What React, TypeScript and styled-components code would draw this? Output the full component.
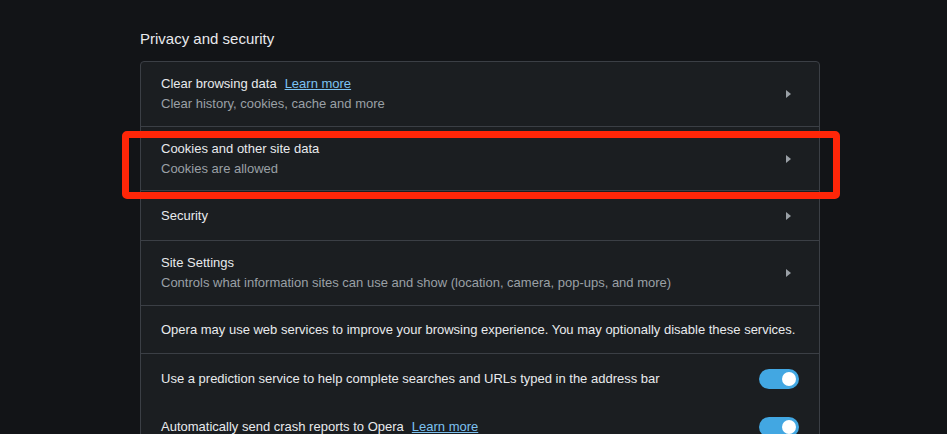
import React from "react";
import styled, { createGlobalStyle } from "styled-components";

const GlobalStyle = createGlobalStyle`
  html, body {
    margin: 0;
    padding: 0;
    background: #121417;
    font-family: "Liberation Sans", Arial, sans-serif;
    color: #e8eaed;
  }
`;

const Page = styled.main`
  height: 434px;
  overflow: hidden;
  padding: 29px 0 0 140px;
  box-sizing: border-box;
`;

const Section = styled.section`
  width: 680px;
`;

const Heading = styled.h2`
  margin: 0 0 12px;
  font-size: 15px;
  font-weight: 400;
  line-height: 20px;
  color: #e8eaed;
`;

const Card = styled.div`
  position: relative;
  background: #1b1e21;
  border: 1px solid #3b3f45;
  border-radius: 4px;
`;

const Row = styled.div<{ $height?: number; $divider?: boolean }>`
  display: flex;
  align-items: center;
  justify-content: space-between;
  min-height: ${(p) => p.$height ?? 48}px;
  padding: 0 20px;
  box-sizing: border-box;
  border-top: ${(p) => (p.$divider ? "1px solid #3b3f45" : "none")};
`;

const Text = styled.div`
  display: flex;
  flex-direction: column;
`;

const Title = styled.div`
  font-size: 13px;
  line-height: 20px;
  color: #e8eaed;
`;

const Sub = styled.div`
  font-size: 13px;
  line-height: 20px;
  color: #9aa0a6;
`;

const Link = styled.a`
  margin-left: 8px;
  color: #7cc2f2;
  text-decoration: underline;
  cursor: pointer;
`;

const Arrow = styled.span`
  width: 0;
  height: 0;
  margin-right: 8px;
  border-top: 4px solid transparent;
  border-bottom: 4px solid transparent;
  border-left: 5px solid #9aa0a6;
`;

const Toggle = styled.span<{ $on?: boolean }>`
  position: relative;
  flex: none;
  width: 40px;
  height: 20px;
  border-radius: 10px;
  background: ${(p) => (p.$on ? "#42a7e2" : "#5f6368")};

  &::after {
    content: "";
    position: absolute;
    top: 3px;
    ${(p) => (p.$on ? "right: 3px;" : "left: 3px;")}
    width: 14px;
    height: 14px;
    border-radius: 50%;
    background: #ffffff;
  }
`;

const Highlight = styled.div`
  position: absolute;
  top: 69px;
  left: -19px;
  width: 718px;
  height: 68px;
  box-sizing: border-box;
  border: 7px solid #ff2608;
  border-radius: 5px;
  pointer-events: none;
`;

const App = () => {
  return (
    <>
      <GlobalStyle />
      <Page>
        <Section>
          <Heading>Privacy and security</Heading>
          <Card>
            <Row $height={64}>
              <Text>
                <Title>
                  Clear browsing data<Link>Learn more</Link>
                </Title>
                <Sub>Clear history, cookies, cache and more</Sub>
              </Text>
              <Arrow />
            </Row>
            <Row $height={64} $divider>
              <Text>
                <Title>Cookies and other site data</Title>
                <Sub>Cookies are allowed</Sub>
              </Text>
              <Arrow />
            </Row>
            <Row $height={50} $divider>
              <Title>Security</Title>
              <Arrow />
            </Row>
            <Row $height={65} $divider>
              <Text>
                <Title>Site Settings</Title>
                <Sub>
                  Controls what information sites can use and show (location, camera, pop-ups, and more)
                </Sub>
              </Text>
              <Arrow />
            </Row>
            <Row $height={48} $divider>
              <Title>
                Opera may use web services to improve your browsing experience. You may optionally disable these
                services.
              </Title>
            </Row>
            <Row $height={50} $divider>
              <Title>Use a prediction service to help complete searches and URLs typed in the address bar</Title>
              <Toggle $on />
            </Row>
            <Row $height={48}>
              <Title>
                Automatically send crash reports to Opera<Link>Learn more</Link>
              </Title>
              <Toggle $on />
            </Row>
            <Highlight />
          </Card>
        </Section>
      </Page>
    </>
  );
};

export default App;
